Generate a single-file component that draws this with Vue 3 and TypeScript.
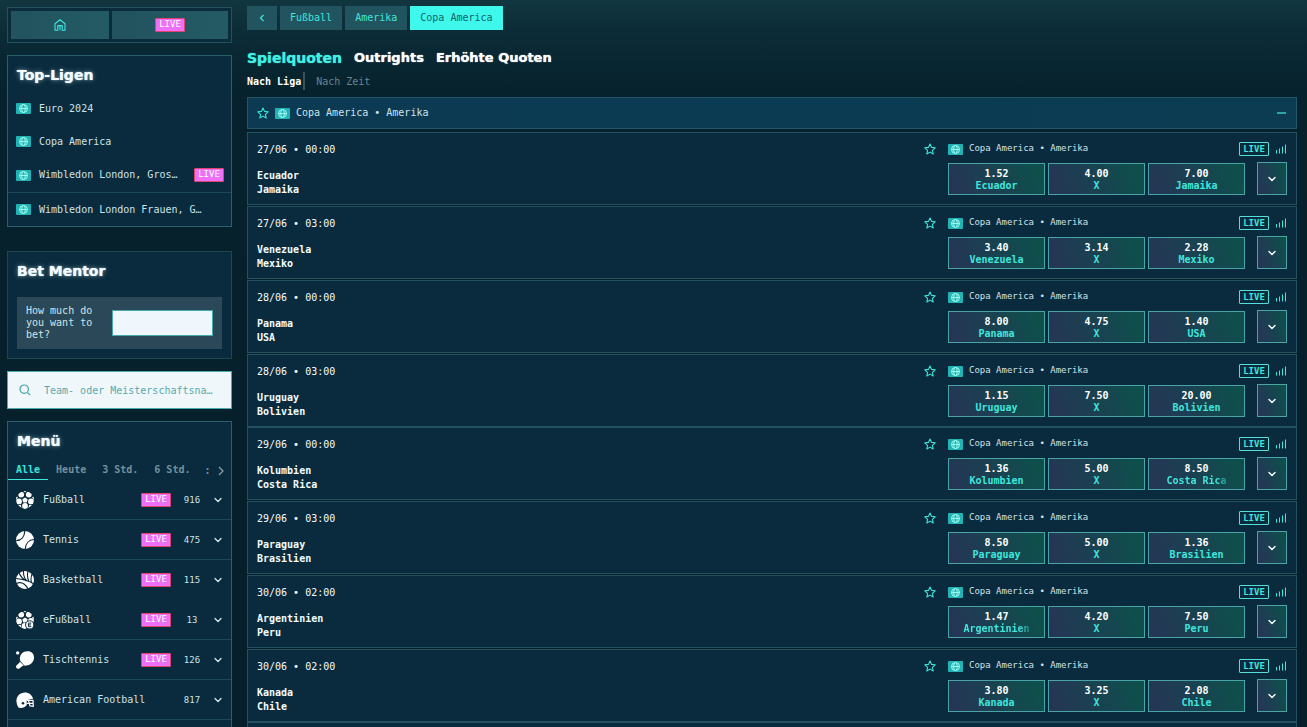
<script setup lang="ts">
import { ref } from 'vue'

interface League { name: string; live?: boolean; divided?: boolean }
interface Sport { name: string; icon: string; count: number; live: boolean; divided: boolean }
interface Match { date: string; home: string; away: string; odds: [string, string, string] }

const leagues: League[] = [
  { name: 'Euro 2024' },
  { name: 'Copa America' },
  { name: 'Wimbledon London, Gros…', live: true, divided: true },
  { name: 'Wimbledon London Frauen, G…' },
]

const sports: Sport[] = [
  { name: 'Fußball', icon: 'soccer', count: 916, live: true, divided: true },
  { name: 'Tennis', icon: 'tennis', count: 475, live: true, divided: true },
  { name: 'Basketball', icon: 'basket', count: 115, live: true, divided: false },
  { name: 'eFußball', icon: 'esoccer', count: 13, live: true, divided: true },
  { name: 'Tischtennis', icon: 'paddle', count: 126, live: true, divided: true },
  { name: 'American Football', icon: 'helmet', count: 817, live: false, divided: true },
]

const matches: Match[] = [
  { date: '27/06 • 00:00', home: 'Ecuador', away: 'Jamaika', odds: ['1.52', '4.00', '7.00'] },
  { date: '27/06 • 03:00', home: 'Venezuela', away: 'Mexiko', odds: ['3.40', '3.14', '2.28'] },
  { date: '28/06 • 00:00', home: 'Panama', away: 'USA', odds: ['8.00', '4.75', '1.40'] },
  { date: '28/06 • 03:00', home: 'Uruguay', away: 'Bolivien', odds: ['1.15', '7.50', '20.00'] },
  { date: '29/06 • 00:00', home: 'Kolumbien', away: 'Costa Rica', odds: ['1.36', '5.00', '8.50'] },
  { date: '29/06 • 03:00', home: 'Paraguay', away: 'Brasilien', odds: ['8.50', '5.00', '1.36'] },
  { date: '30/06 • 02:00', home: 'Argentinien', away: 'Peru', odds: ['1.47', '4.20', '7.50'] },
  { date: '30/06 • 02:00', home: 'Kanada', away: 'Chile', odds: ['3.80', '3.25', '2.08'] },
]

const outcomes = (m: Match) => [
  { label: m.home, value: m.odds[0] },
  { label: 'X', value: m.odds[1] },
  { label: m.away, value: m.odds[2] },
]

const periods = ['Alle', 'Heute', '3 Std.', '6 Std.']
const period = ref('Alle')
const stake = ref('')
</script>

<template>
  <div class="page">
    <svg class="defs" width="0" height="0" aria-hidden="true">
      <symbol id="flag" viewBox="0 0 15 11">
        <rect width="15" height="11" rx="1" fill="#22b4b5" />
        <g fill="none" stroke="#a8fff4" stroke-width="0.9">
          <circle cx="7.5" cy="5.5" r="4" />
          <ellipse cx="7.5" cy="5.5" rx="1.8" ry="4" />
          <path d="M3.5 5.5h8" />
        </g>
      </symbol>
      <symbol id="star" viewBox="0 0 12 12">
        <path d="M6 1l1.5 3.4 3.7.4-2.8 2.5.8 3.7L6 9.100 2.800 11l.8-3.700L.8 4.800l3.700-.4z" fill="none" stroke="currentColor" stroke-width="1.100" stroke-linejoin="round" />
      </symbol>
      <symbol id="down" viewBox="0 0 10 10">
        <path d="M2 3.500l3 3 3-3" fill="none" stroke="currentColor" stroke-width="1.400" stroke-linecap="round" stroke-linejoin="round" />
      </symbol>
      <symbol id="signal" viewBox="0 0 12 10">
        <path d="M1.500 9.500V6M4.500 9.500V4.500M7.500 9.500V2.500M10.500 9.500V.5" fill="none" stroke="currentColor" stroke-width="1" />
      </symbol>
      <clipPath id="ball"><circle cx="9" cy="9" r="9" /></clipPath>
      <symbol id="soccer" viewBox="0 0 18 18">
        <g clip-path="url(#ball)" fill="#fff">
          <path d="M9 6.400l2.700 1.900-1 3.200H7.300l-1-3.200z" />
          <circle cx="5.200" cy="3.600" r="2.900" /><circle cx="12.800" cy="3.600" r="2.900" />
          <circle cx="15" cy="10.400" r="2.900" /><circle cx="9" cy="15" r="2.900" /><circle cx="3" cy="10.400" r="2.900" />
          <path d="M7.500 0h3L9 1.500zM0 5l2 1.500L0 9zM18 5l-2 1.500L18 9zM2 14h2.800l.8 3zM16 14h-2.800l-.8 3z" />
        </g>
      </symbol>
      <symbol id="esoccer" viewBox="0 0 18 18">
        <g clip-path="url(#ball)" fill="#fff">
          <path d="M9 6.400l2.700 1.900-1 3.200H7.300l-1-3.200z" />
          <circle cx="5.200" cy="3.600" r="2.900" /><circle cx="12.800" cy="3.600" r="2.900" />
          <circle cx="15" cy="10" r="2.900" /><circle cx="8.500" cy="15" r="2.900" /><circle cx="3" cy="10.400" r="2.900" />
          <path d="M7.500 0h3L9 1.500zM0 5l2 1.500L0 9zM18 5l-2 1.500L18 9zM2 14h2.800l.8 3z" />
        </g>
        <circle cx="13.700" cy="13.900" r="4.100" fill="#fff" stroke="#0a2a3c" stroke-width="1" />
        <path d="M15.300 12.100h-2.900v3.600h2.900M12.400 13.900h2.500" fill="none" stroke="#0a2a3c" stroke-width="1" />
      </symbol>
      <symbol id="tennis" viewBox="0 0 18 18">
        <circle cx="9" cy="9" r="9" fill="#fff" />
        <path d="M.2 9.500C5 9.500 8.500 6 8.800 0M9.200 18c.3-5.500 3.800-9.200 8.800-9.500" fill="none" stroke="#0a2a3c" stroke-width="1.200" />
      </symbol>
      <symbol id="basket" viewBox="0 0 18 18">
        <circle cx="9" cy="9" r="9" fill="#fff" />
        <path d="M0 7.500c6 .5 12 2 18 5.500M0 12.500c5-2 9-.5 12 5.500M3 2c1.500 3.500 4 6 7 7.800M7.500 0c-.2 4 1 7.500 3.500 10M12 0c-1 4-.6 7.500 1 10.700M16 3c-1.200 3-1.200 6-.5 8.800" fill="none" stroke="#0a2a3c" stroke-width="1.100" />
      </symbol>
      <symbol id="paddle" viewBox="0 0 18 18">
        <circle cx="1.700" cy="1.900" r="1.700" fill="#fff" />
        <path d="M4.200 9.800C2.800 4.500 6 .4 11.200.2 15.600 0 18 2.800 18 6.600c0 5-4.600 8.800-9.800 7.900z" fill="#fff" />
        <path d="M4 10.700l3.700 3.900-1.900.9-2.400 1.900c-2 1.300-4.300-.8-3-2.800l2.400-2.400z" fill="#fff" />
      </symbol>
      <symbol id="helmet" viewBox="0 0 18 18">
        <path d="M1.500 14.800C-1.500 8 2.200 1.500 9 1.500c4 0 7.200 2.500 8.100 6.300l-6.600 1.500c.3 1.700.5 3.300 0 5.200l-2.300 1.700c-2.300 1-4.800.8-5.800.2z" fill="#fff" />
        <circle cx="7" cy="12.300" r="1.300" fill="#0a2a3c" />
        <path d="M10.500 9.500l6.500-.2.300 6.100-3.300-.5-1.500-5.200M10.900 12.300h6.200" fill="none" stroke="#fff" stroke-width="1.200" />
      </symbol>
    </svg>

    <aside class="side">
      <nav class="switch">
        <button class="switch-btn home" type="button" aria-label="Home">
          <svg width="12" height="12" viewBox="0 0 12 12"><path d="M1 4.800L6 .8l5 4v6.400H8.200V6.600H3.800v4.600H1zM6 6.600v4.600" fill="none" stroke="currentColor" stroke-width="1.100" stroke-linejoin="round" /></svg>
        </button>
        <button class="switch-btn live" type="button"><span class="badge">LIVE</span></button>
      </nav>

      <section class="panel leagues">
        <h2 class="title">Top-Ligen</h2>
        <ul class="list">
          <li v-for="l in leagues" :key="l.name" class="league" :class="{ divided: l.divided }">
            <svg class="flag"><use href="#flag" /></svg>
            <a class="league-name" href="#">{{ l.name }}</a>
            <span v-if="l.live" class="badge">LIVE</span>
          </li>
        </ul>
      </section>

      <section class="panel mentor">
        <h2 class="title">Bet Mentor</h2>
        <div class="stake">
          <label for="stake">How much do you want to bet?</label>
          <input id="stake" v-model="stake" type="text" />
        </div>
      </section>

      <div class="search">
        <svg width="12" height="12" viewBox="0 0 12 12"><circle cx="5.200" cy="5.200" r="4.200" fill="none" stroke="#43a3a8" stroke-width="1.200" /><path d="M8.400 8.400l2.800 2.800" stroke="#43a3a8" stroke-width="1.200" /></svg>
        <input type="text" placeholder="Team- oder Meisterschaftsna…" aria-label="Team- oder Meisterschaftsna…" />
      </div>

      <section class="panel menu">
        <h2 class="title">Menü</h2>
        <div class="periods">
          <button v-for="p in periods" :key="p" type="button" class="period" :class="{ active: p === period }" @click="period = p">{{ p }}</button>
          <span class="rest">:</span>
          <svg class="more" width="8" height="10" viewBox="0 0 8 10"><path d="M2 1l4 4-4 4" fill="none" stroke="currentColor" stroke-width="1.200" /></svg>
        </div>
        <ul class="list">
          <li v-for="s in sports" :key="s.name" class="sport" :class="{ underlined: s.divided }">
            <svg class="sport-icon"><use :href="'#' + s.icon" /></svg>
            <a class="sport-name" href="#">{{ s.name }}</a>
            <span v-if="s.live" class="badge">LIVE</span>
            <span class="count">{{ s.count }}</span>
            <svg class="chev"><use href="#down" /></svg>
          </li>
        </ul>
      </section>
    </aside>

    <main class="main">
      <nav class="crumbs">
        <a class="crumb back" href="#" aria-label="‹"><svg width="6" height="8" viewBox="0 0 6 8"><path d="M4.500 1l-3 3 3 3" fill="none" stroke="currentColor" stroke-width="1.200" /></svg></a>
        <a class="crumb" href="#">Fußball</a>
        <a class="crumb" href="#">Amerika</a>
        <a class="crumb current" href="#">Copa America</a>
      </nav>

      <div class="tabs">
        <button class="tab active" type="button">Spielquoten</button>
        <button class="tab" type="button">Outrights</button>
        <button class="tab" type="button">Erhöhte Quoten</button>
      </div>
      <div class="subtabs">
        <button class="subtab active" type="button">Nach Liga</button>
        <button class="subtab" type="button">Nach Zeit</button>
      </div>

      <header class="group">
        <svg class="star"><use href="#star" /></svg>
        <svg class="flag"><use href="#flag" /></svg>
        <span class="group-name">Copa America • Amerika</span>
        <button class="collapse" type="button" aria-label="–"></button>
      </header>

      <div class="matches">
        <article v-for="m in matches" :key="m.home" class="match">
          <div class="teams">
            <time class="date">{{ m.date }}</time>
            <span>{{ m.home }}</span>
            <span>{{ m.away }}</span>
          </div>
          <svg class="star"><use href="#star" /></svg>
          <div class="market">
            <div class="meta">
              <svg class="flag"><use href="#flag" /></svg>
              <span class="meta-name">Copa America • Amerika</span>
              <span class="outlined">LIVE</span>
              <svg class="signal"><use href="#signal" /></svg>
            </div>
            <div class="odds">
              <button v-for="o in outcomes(m)" :key="o.label" class="odd" type="button">
                <span class="value">{{ o.value }}</span>
                <span class="outcome" :class="{ faded: o.label.length > 9 }">{{ o.label }}</span>
              </button>
              <button class="expand" type="button" aria-label="+"><svg class="chev"><use href="#down" /></svg></button>
            </div>
          </div>
        </article>
        <div class="match"></div>
      </div>
    </main>
  </div>
</template>

<style>
body { margin: 0; background: #06202b; }
</style>

<style scoped>
* { box-sizing: border-box; }
.page {
  --line: #23515f;
  --panel: #0a2b3d;
  --cyan: #3ee6dc;
  display: flex;
  gap: 15px;
  height: 100vh;
  overflow: hidden;
  padding: 0 10px 0 7px;
  background: linear-gradient(180deg, #12363f 0, #0b2b36 35px, #06222d 90px, #061f2a 100%);
  color: #cfe3ea;
  font: 10px/14px "DejaVu Sans Mono", "Liberation Mono", monospace;
}
.defs { position: absolute; }
button, input { font: inherit; color: inherit; border: 0; border-radius: 0; padding: 0; margin: 0; background: none; }
a { color: inherit; text-decoration: none; }
svg { flex: none; display: block; }
.list { list-style: none; margin: 0; padding: 0; }
.flag { width: 15px; height: 11px; }
.star { width: 12px; height: 12px; color: var(--cyan); }
.chev { width: 10px; height: 10px; }

.side { width: 225px; flex: none; display: flex; flex-direction: column; padding-top: 7px; }
.switch { display: flex; gap: 3px; padding: 3px; height: 36px; flex: none; border: 1px solid var(--line); background: #0b2d3b; margin-bottom: 12px; }
.switch-btn { display: flex; align-items: center; justify-content: center; background: linear-gradient(90deg, #22535f, #235b64); color: var(--cyan); }
.home { flex: 98; }
.live { flex: 116; }
.badge { flex: none; width: 30px; height: 14px; border: 1px solid #e0446c; border-radius: 1px; background: #ee6ff8; color: #fff; font-size: 9px; line-height: 11px; text-align: center; }

.panel { flex: none; border: 1px solid #28616b; background: var(--panel); }
.title { margin: 0; padding: 0 9px; font: 700 14px/18px "DejaVu Sans", sans-serif; color: #f2fbff; text-shadow: 0 0 1px #f2fbff, 0 0 5px rgba(190, 225, 240, 0.6); }
.leagues { padding-top: 10px; margin-bottom: 24px; }
.leagues .title { margin-bottom: 8px; }
.league { display: flex; align-items: center; height: 33px; padding: 0 7px 0 8px; gap: 8px; }
.league.divided { height: 35px; border-bottom: 1px solid #1d4857; }
.league-name { flex: 1; white-space: nowrap; }

.mentor { height: 108px; padding-top: 10px; margin-bottom: 12px; border-color: #1d4753; }
.stake { display: flex; align-items: center; gap: 9px; height: 52px; margin: 17px 9px 0; padding: 0 9px; background: #2a4857; line-height: 12px; }
.stake label { flex: 1; }
.stake input { width: 101px; height: 26px; border: 1px solid #45a9ae; background: #eff7fc; color: #14404c; }

.search { display: flex; flex: none; align-items: center; gap: 13px; height: 38px; margin-bottom: 12px; padding: 0 10px 0 11px; border: 1px solid #45a9ae; background: #eff7fa; }
.search input { flex: 1; min-width: 0; padding-top: 2px; color: #14404c; }
.search input::placeholder { color: #58a9ad; opacity: 1; }

.menu { flex: 1 0 auto; padding-top: 10px; border-bottom: 0; }
.periods { display: flex; align-items: center; height: 29px; margin-top: 1px; }
.period { height: 29px; padding: 10px 8px 0; font-weight: 700; color: #75909c; white-space: nowrap; border-bottom: 1px solid transparent; }
.period.active { color: var(--cyan); border-color: var(--cyan); }
.rest { margin: 10px 0 0 6px; font-weight: 700; color: #75909c; }
.more { margin: 10px 6px 0 auto; color: #8ca4ad; }
.sport { display: flex; align-items: center; height: 40px; padding: 0 8px; border-bottom: 1px solid transparent; }
.sport.underlined { border-color: #1d4857; }
.sport-icon { width: 18px; height: 18px; margin-right: 9px; }
.sport-name { flex: 1; white-space: nowrap; }
.count { width: 20px; margin: 0 11px 0 11px; font-size: 9px; text-align: center; }

.main { flex: 1; min-width: 0; display: flex; flex-direction: column; padding-top: 6px; }
.crumbs { display: flex; gap: 3px; height: 24px; flex: none; }
.crumb { display: flex; align-items: center; padding: 0 10px; background: #22545f; color: var(--cyan); }
.crumb.back { padding: 0 12px; }
.crumb.current { background: #3ff8ec; color: #11646c; }
.tabs { display: flex; gap: 12px; margin-top: 18px; height: 20px; flex: none; }
.tab { font: 700 13px/20px "DejaVu Sans", sans-serif; color: #fff; text-shadow: 0 0 1px currentColor; white-space: nowrap; }
.tab.active { font-size: 14px; color: #40f0e4; }
.subtabs { display: flex; gap: 11px; height: 18px; margin: 4px 0 7px; flex: none; }
.subtab { padding-top: 1px; color: #6d848e; }
.subtab.active { padding-right: 2px; color: #fff; font-weight: 700; border-right: 2px solid #3b515b; }

.group { display: flex; align-items: center; flex: none; height: 32px; padding: 0 10px 0 9px; border: 1px solid #235669; background: linear-gradient(90deg, #0b3a52, #0b3c52); margin-bottom: 3px; }
.group .flag { margin: 0 6px; }
.group-name { flex: 1; }
.collapse { width: 9px; height: 2px; background: #2ba5a5; }

.matches { display: flex; flex-direction: column; gap: 1px; }
.match { display: flex; flex: none; height: 73px; padding: 9px 9px 0; border: 1px solid var(--line); background: var(--panel); }
.match:nth-child(4n + 5) { margin-top: -1px; }
.teams { flex: 1; display: flex; flex-direction: column; padding-top: 1px; color: #f4fbff; font-weight: 700; }
.date { margin-bottom: 12px; font-weight: 400; }
.match > .star { margin: 1px 12px 0 0; }
.meta { display: flex; align-items: center; height: 14px; margin-bottom: 6px; font-size: 9px; }
.meta-name { flex: 1; margin-left: 6px; line-height: 12px; padding-bottom: 2px; }
.outlined { width: 30px; height: 14px; border: 1px solid #55dfdb; border-radius: 1px; color: var(--cyan); font-weight: 700; line-height: 12px; text-align: center; }
.signal { width: 12px; height: 10px; margin-left: 6px; color: var(--cyan); }
.odds { display: flex; align-items: flex-end; gap: 3px; }
.odd, .expand { border: 1px solid #4aa3a6; background: linear-gradient(70deg, #263555 0%, #1c3f52 40%, #0e4f4c 90%); }
.odd { display: flex; flex-direction: column; align-items: center; justify-content: center; width: 97px; height: 32px; padding-top: 1px; font-weight: 700; line-height: 12px; }
.value { color: #fff; }
.outcome { color: var(--cyan); }
.faded { mask-image: linear-gradient(90deg, #000 82%, rgba(0, 0, 0, 0.35) 100%); }
.expand { display: flex; align-items: center; justify-content: center; width: 30px; height: 33px; margin-left: 9px; color: #fff; }
</style>
